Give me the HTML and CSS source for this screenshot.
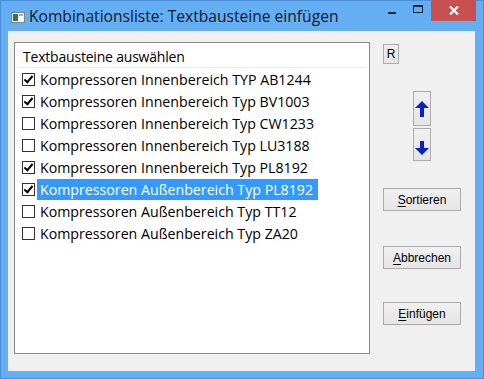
FILE: index.html
```html
<!DOCTYPE html>
<html>
<head>
<meta charset="utf-8">
<link rel="stylesheet" href="styles.css">
</head>
<body>
<div class="window">
  <div class="titlebar">
    <svg class="app-icon" width="14" height="11" viewBox="0 0 14 11">
      <rect x="0.5" y="0.5" width="13" height="10" fill="#e8ecef" stroke="#7a8a8a"/>
      <rect x="2" y="2" width="5" height="7" fill="#3f6f5a"/>
      <rect x="8" y="2" width="4" height="7" fill="#ffffff"/>
      <rect x="8" y="2" width="4" height="2" fill="#9fb0b0"/>
    </svg>
    <span class="title">Kombinationsliste: Textbausteine einfügen</span>
    <div class="caption-buttons">
      <div class="cap-btn min"><svg width="8" height="3" viewBox="0 0 8 3"><rect x="0" y="0" width="8" height="2" fill="#14263f"/></svg></div>
      <div class="cap-btn max"><svg width="10" height="8" viewBox="0 0 10 8"><rect x="0.5" y="0.5" width="9" height="7" fill="none" stroke="#14263f"/><rect x="0" y="0" width="10" height="2" fill="#14263f"/></svg></div>
      <div class="cap-btn close"><svg width="10" height="9" viewBox="0 0 10 9"><path d="M1 0.5 L9 8.5 M9 0.5 L1 8.5" stroke="#fff" stroke-width="2.2"/></svg></div>
    </div>
  </div>
  <div class="client">
    <div class="listbox">
      <div class="list-header">Textbausteine auswählen</div>
      <div class="list-sep"></div>
      <div class="row"><span class="cb checked"></span><span class="label">Kompressoren Innenbereich TYP AB1244</span></div>
      <div class="row"><span class="cb checked"></span><span class="label">Kompressoren Innenbereich Typ BV1003</span></div>
      <div class="row"><span class="cb"></span><span class="label">Kompressoren Innenbereich Typ CW1233</span></div>
      <div class="row"><span class="cb"></span><span class="label">Kompressoren Innenbereich Typ LU3188</span></div>
      <div class="row"><span class="cb checked"></span><span class="label">Kompressoren Innenbereich Typ PL8192</span></div>
      <div class="row"><span class="cb checked"></span><span class="label selected">Kompressoren Außenbereich Typ PL8192</span></div>
      <div class="row"><span class="cb"></span><span class="label">Kompressoren Außenbereich Typ TT12</span></div>
      <div class="row"><span class="cb"></span><span class="label">Kompressoren Außenbereich Typ ZA20</span></div>
    </div>
    <div class="side">
      <div class="btn btn-r">R</div>
      <div class="arrows">
        <div class="btn btn-arrow up">
          <svg width="14" height="16" viewBox="0 0 14 16"><path d="M7 0 L14 7 L9 7 L9 16 L5 16 L5 7 L0 7 Z" fill="#0a1fc8"/></svg>
        </div>
        <div class="btn btn-arrow down">
          <svg width="14" height="14" viewBox="0 0 14 14"><path d="M7 14 L14 7 L9 7 L9 0 L5 0 L5 7 L0 7 Z" fill="#0a1fc8"/></svg>
        </div>
      </div>
      <div class="btn btn-wide sort"><span><u>S</u>ortieren</span></div>
      <div class="btn btn-wide cancel"><span><u>A</u>bbrechen</span></div>
      <div class="btn btn-wide insert"><span><u>E</u>infügen</span></div>
    </div>
  </div>
</div>
</body>
</html>
```
FILE: styles.css
```css
html, body {
  margin: 0;
  padding: 0;
  background: #ffffff;
}
.window {
  width: 484px;
  height: 379px;
  box-sizing: border-box;
  background: #64aef3;
  border: 1px solid #4d8fd6;
  display: flex;
  flex-direction: column;
  font-family: "Open Sans", "Liberation Sans", sans-serif;
}
.titlebar {
  height: 30px;
  display: flex;
  align-items: flex-start;
  position: relative;
}
.app-icon {
  margin: 11px 0 0 10px;
}
.title {
  margin: 5px 0 0 4px;
  font-size: 15.6px;
  color: #0e1a2a;
  line-height: 20px;
}
.caption-buttons {
  margin-left: auto;
  margin-right: 7px;
  display: flex;
  align-items: flex-start;
  margin-top: -1px;
}
.cap-btn {
  display: flex;
  align-items: center;
  justify-content: center;
}
.cap-btn.min {
  width: 26px;
  height: 20px;
  padding-top: 6px;
  box-sizing: border-box;
}
.cap-btn.max {
  width: 26px;
  height: 20px;
  padding-bottom: 3px;
  box-sizing: border-box;
}
.cap-btn.close {
  width: 45px;
  height: 21px;
  background: #c75050;
}
.client {
  margin: 0 8px 7px 7px;
  flex: 1;
  background: #f0f0f0;
  display: flex;
  align-items: flex-start;
  padding: 11px 0 0 6px;
  box-sizing: border-box;
}
.listbox {
  width: 356px;
  height: 312px;
  box-sizing: border-box;
  background: #ffffff;
  border: 1px solid #8a8a8a;
  display: flex;
  flex-direction: column;
  font-family: "Open Sans", "Liberation Sans", sans-serif;
  font-size: 14.2px;
  color: #000;
}
.list-header {
  height: 24px;
  line-height: 24px;
  padding-left: 8px;
  padding-top: 2px;
  box-sizing: border-box;
  font-size: 14px;
  letter-spacing: -0.2px;
}
.list-sep {
  height: 1px;
  background: #e8ecf2;
  margin: 0 2px;
}
.row {
  height: 22px;
  display: flex;
  align-items: center;
}
.cb {
  width: 11px;
  height: 11px;
  border: 1px solid #333333;
  background: #fff;
  margin-left: 7px;
  margin-right: 2px;
  position: relative;
  flex: none;
}
.cb.checked::after {
  content: "";
  position: absolute;
  left: 3px;
  top: 0px;
  width: 3px;
  height: 7px;
  border: solid #000;
  border-width: 0 2px 2px 0;
  transform: rotate(40deg);
}
.label {
  height: 21px;
  line-height: 21px;
  padding: 0 5px 0 3px;
  margin-top: 1px;
  white-space: nowrap;
}
.label.selected {
  background: #3399ff;
  color: #ffffff;
}
.side {
  margin-left: 13px;
  display: flex;
  flex-direction: column;
  align-items: flex-start;
}
.btn {
  box-sizing: border-box;
  border: 1px solid #acacac;
  background: linear-gradient(#f0f0f0, #e5e5e5);
  display: flex;
  align-items: center;
  justify-content: center;
  font-family: "Liberation Sans", Arial, sans-serif;
  font-size: 12px;
  color: #000;
}
.btn-r {
  width: 16px;
  height: 20px;
  margin-top: 2px;
}
.arrows {
  margin-left: 30px;
  margin-top: 27px;
  display: flex;
  flex-direction: column;
}
.btn-arrow {
  width: 18px;
  height: 35px;
}
.btn-arrow.down {
  height: 33px;
  margin-top: 2px;
  padding-top: 7px;
}
.btn-wide {
  width: 78px;
  height: 23px;
}
.btn-wide u {
  text-underline-offset: 2px;
}
.sort {
  margin-top: 27px;
}
.cancel {
  margin-top: 35px;
}
.insert {
  margin-top: 33px;
}
```
